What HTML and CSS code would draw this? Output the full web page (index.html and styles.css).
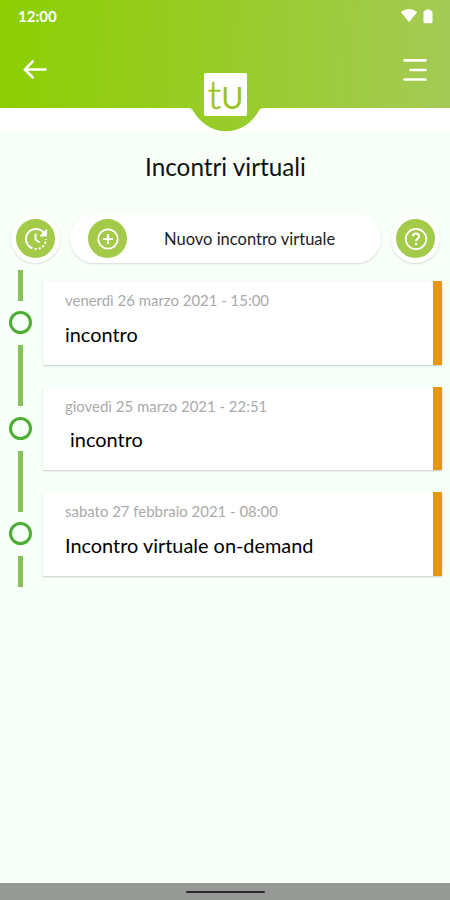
FILE: index.html
```html
<!DOCTYPE html>
<html lang="it">
<head>
    <meta charset="UTF-8">
    <meta name="viewport" content="width=device-width, initial-scale=1.0">
    <title>Incontri virtuali</title>
    <link rel="stylesheet" href="styles.css">
</head>
<body>
    <header class="header">
        <svg class="header-bg" width="450" height="132" viewBox="0 0 450 132">
            <defs>
                <linearGradient id="verde" gradientUnits="userSpaceOnUse" x1="0" y1="40" x2="450" y2="60">
                    <stop offset="0" stop-color="#8ccf02"/>
                    <stop offset="0.5" stop-color="#98cc29"/>
                    <stop offset="1" stop-color="#a4ca55"/>
                </linearGradient>
            </defs>
            <path fill="url(#verde)" d="M0 0H450V108H263Q260.500 108 259 110.500C252 123 240 131.300 226 131.300S200 123 193 110.500Q191.500 108 189 108H0Z"/>
        </svg>
        <div class="status">
            <span class="ora">12:00</span>
            <svg width="34" height="16" viewBox="0 0 34 16" fill="#fff">
                <path d="M0.800 4Q9 -2.200 17.200 4L9 14.300Z"/>
                <path d="M26 1.500H30V2.500H31Q32.500 2.500 32.500 4V14Q32.500 15.300 31 15.300H25Q23.500 15.300 23.500 14V4Q23.500 2.500 25 2.500H26Z"/>
            </svg>
        </div>
        <div class="barra">
            <svg width="24" height="20" viewBox="0 0 24 20" fill="none" stroke="#fff" stroke-width="2.500" stroke-linecap="round" stroke-linejoin="round">
                <path d="M22.500 10.500H1.800M9.800 2.300L1.800 10.500L9.800 18.500"/>
            </svg>
            <div class="logo"><span class="logo-t">t</span><span class="logo-u">u</span></div>
            <svg width="26" height="24" viewBox="0 0 26 24" fill="none" stroke="#fff" stroke-width="2.700" stroke-linecap="round">
                <path d="M2.500 2.300H23.500M8.500 12H23.500M2.500 21.500H23.500"/>
            </svg>
        </div>
    </header>

    <main>
        <h1>Incontri virtuali</h1>

        <div class="azioni">
            <button class="tondo" aria-label="Storico">
                <span class="icona">
                    <svg width="24" height="24" viewBox="0 0 24 24" fill="none" stroke="#fff" stroke-width="2">
                        <path d="M8.500 21.300A10 10 0 1 1 19.600 5.500"/>
                        <path d="M10.500 22A10 10 0 0 0 22 12" stroke-dasharray="2.200 1.900"/>
                        <path d="M22.500 2.500V9H16Z" fill="#fff" stroke="#fff" stroke-width="1"/>
                        <path d="M11.500 6.500V12.500L15.500 15.500"/>
                    </svg>
                </span>
            </button>
            <button class="nuovo">
                <span class="icona">
                    <svg width="24" height="24" viewBox="0 0 24 24" fill="none" stroke="#fff" stroke-width="1.800">
                        <circle cx="12" cy="12" r="9.700"/>
                        <path d="M12 7V17M7 12H17" stroke-width="2.200"/>
                    </svg>
                </span>
                <span class="testo">Nuovo incontro virtuale</span>
            </button>
            <button class="tondo" aria-label="Aiuto">
                <span class="icona">
                    <svg width="24" height="24" viewBox="0 0 24 24" fill="none" stroke="#fff" stroke-width="1.800">
                        <circle cx="12" cy="12" r="10.200"/>
                        <path d="M8.900 9.300C8.900 7.500 10.200 6.400 12 6.400S15.100 7.500 15.100 9.200C15.100 11.500 12 11.400 12 14.300" stroke-width="2"/>
                        <circle cx="12" cy="17" r="1.300" fill="#fff" stroke="none"/>
                    </svg>
                </span>
            </button>
        </div>

        <div class="lista">
            <div class="riga">
                <div class="linea"><i></i><b></b><i></i></div>
                <div class="card">
                    <p class="data">venerdì 26 marzo 2021 - 15:00</p>
                    <p class="titolo">incontro</p>
                </div>
            </div>
            <div class="riga">
                <div class="linea"><i></i><b></b><i></i></div>
                <div class="card">
                    <p class="data">giovedì 25 marzo 2021 - 22:51</p>
                    <p class="titolo">&nbsp;incontro</p>
                </div>
            </div>
            <div class="riga">
                <div class="linea"><i></i><b></b><i></i></div>
                <div class="card">
                    <p class="data">sabato 27 febbraio 2021 - 08:00</p>
                    <p class="titolo">Incontro virtuale on-demand</p>
                </div>
            </div>
        </div>
    </main>

    <footer class="nav"><span></span></footer>
</body>
</html>
```

FILE: styles.css
```css
* {
    box-sizing: border-box;
}
body {
    margin: 0;
    height: 900px;
    display: flex;
    flex-direction: column;
    background: #f8fff9;
    font-family: Lato, sans-serif;
    color: #111;
    overflow: hidden;
}
svg {
    display: block;
}
.header {
    position: relative;
    height: 132px;
    background: #fff;
}
.header-bg {
    position: absolute;
    top: 0;
    left: 0;
}
.status {
    position: relative;
    display: flex;
    justify-content: space-between;
    padding: 8px 16px 0 18px;
    height: 48px;
    color: #fff;
}
.ora {
    font-size: 15px;
    line-height: 17px;
    font-weight: bold;
}
.barra {
    position: relative;
    display: flex;
    justify-content: space-between;
    align-items: flex-start;
    padding: 10px 22px 0 23px;
}
.barra > svg:first-child {
    margin-top: 1px;
}
.logo {
    display: flex;
    justify-content: center;
    align-items: baseline;
    width: 43px;
    height: 43px;
    margin: 15px 0 0 2px;
    background: #fff;
    border-radius: 2px;
    line-height: 43px;
    color: #98c41e;
}
.logo-t {
    font-size: 39px;
    font-weight: 300;
    -webkit-text-stroke: 0.6px #98c41e;
}
.logo-u {
    font-size: 30px;
    text-transform: uppercase;
}
main {
    flex: 1;
}
h1 {
    margin: 20px 0 0;
    padding-left: 1px;
    font-size: 24.3px;
    line-height: 30px;
    font-weight: 400;
    text-align: center;
}
.azioni {
    display: flex;
    justify-content: space-between;
    margin-top: 32px;
    padding: 0 10px 0 11px;
}
button {
    display: flex;
    align-items: center;
    height: 49px;
    padding: 0;
    border: none;
    border-radius: 25px;
    background: #fff;
    box-shadow: 0 1px 2px rgba(0, 0, 0, 0.14);
    font-family: Lato, sans-serif;
    cursor: pointer;
}
.tondo {
    width: 49px;
    justify-content: center;
}
.nuovo {
    width: 311px;
    padding-left: 18px;
}
.icona {
    display: flex;
    align-items: center;
    justify-content: center;
    width: 39px;
    height: 39px;
    border-radius: 50%;
    background: #a3ca49;
}
.testo {
    margin-left: 37px;
    padding-top: 1px;
    font-size: 16.5px;
    color: #222;
    white-space: nowrap;
}
.lista {
    padding: 7px 8px 0 9px;
}
.riga {
    display: flex;
    height: 105.6px;
}
.linea {
    width: 23px;
    margin-right: 11px;
    display: flex;
    flex-direction: column;
    align-items: center;
    justify-content: space-between;
}
.linea i {
    width: 5px;
    height: 30.5px;
    background: #86c25a;
}
.linea b {
    width: 23px;
    height: 23px;
    border: 3px solid #4bae33;
    border-radius: 50%;
}
.card {
    flex: 1;
    height: 83.5px;
    margin-top: 11px;
    padding: 10px 0 0 22px;
    background: #fff;
    border-right: 9px solid #e3980f;
    border-radius: 1px;
    box-shadow: 0 1px 2px rgba(0, 0, 0, 0.2);
}
.card p {
    margin: 0;
    white-space: nowrap;
}
.data {
    font-size: 14.95px;
    line-height: 18px;
    color: #aaa;
}
.card .titolo {
    margin-top: 11.5px;
    font-size: 19.9px;
    line-height: 26px;
    color: #000;
}
.nav {
    height: 17px;
    padding-top: 8px;
    background: #979997;
}
.nav span {
    display: block;
    width: 79px;
    height: 2px;
    margin: 0 auto;
    border-radius: 1px;
    background: #2b2b2b;
}
```
